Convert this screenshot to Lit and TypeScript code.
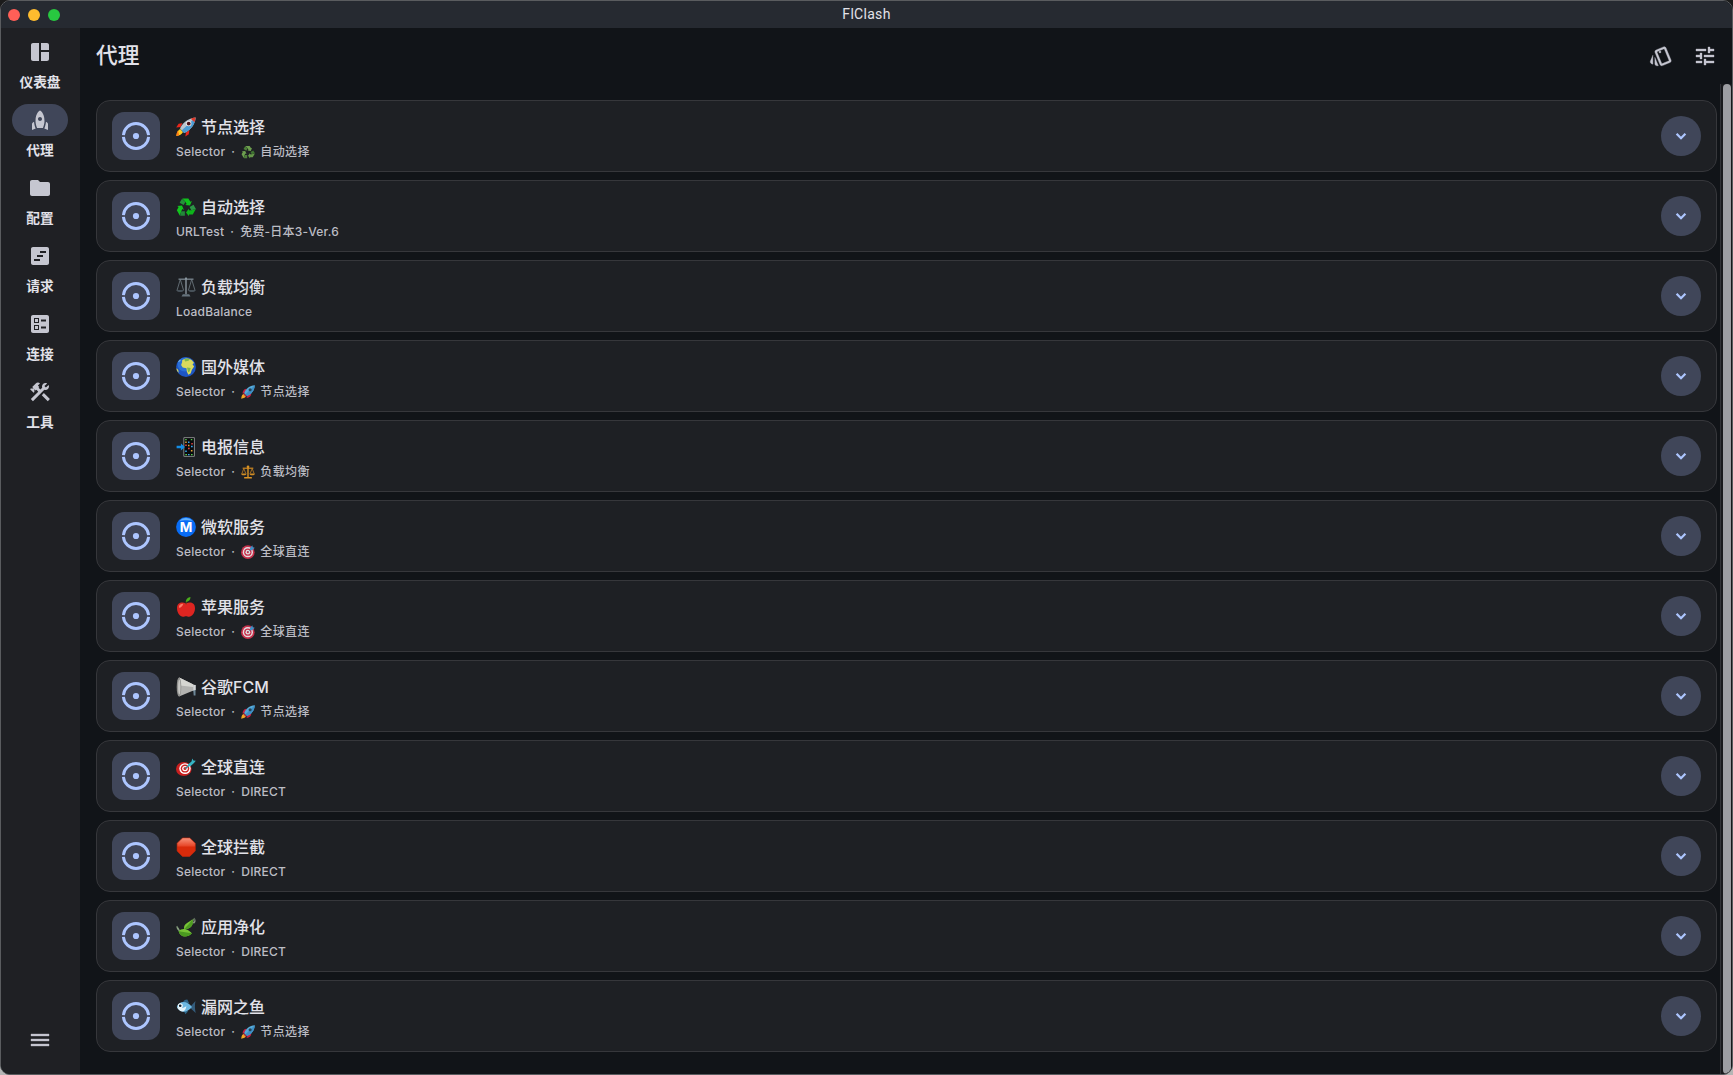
import { LitElement, html, css, svg, nothing } from "lit";
import { customElement, property } from "lit/decorators.js";

/* Rail and toolbar glyphs on a 24-unit grid */
const icons: Record<string, string> = {
  dashboard:
    "M11 21H5c-1.1 0-2-.9-2-2V5c0-1.1.9-2 2-2h6v18zm2 0h6c1.1 0 2-.9 2-2v-7h-8v9zm8-11V5c0-1.1-.9-2-2-2h-6v7h8z",
  rocket:
    "M12 2.5s4.5 2.04 4.5 10.5c0 2.49-1.04 5.57-1.6 7H9.1c-.56-1.43-1.6-4.51-1.6-7C7.5 4.54 12 2.5 12 2.5zm2 8.5c0-1.1-.9-2-2-2s-2 .9-2 2 .9 2 2 2 2-.9 2-2zm-6.31 9.52c-.48-1.23-1.52-4.17-1.67-6.87l-1.13.75c-.56.38-.89 1-.89 1.67V22l3.69-1.48zM20 22v-5.93c0-.67-.33-1.29-.89-1.66l-1.13-.75c-.15 2.69-1.2 5.64-1.67 6.87L20 22z",
  folder:
    "M10 4H4c-1.1 0-1.99.9-1.99 2L2 18c0 1.1.9 2 2 2h16c1.1 0 2-.9 2-2V8c0-1.1-.9-2-2-2h-8l-2-2z",
  timeline:
    "M19 3H5c-1.1 0-2 .9-2 2v14c0 1.1.9 2 2 2h14c1.1 0 2-.9 2-2V5c0-1.1-.9-2-2-2zM12 17H6v-2h6v2zm3-4H9v-2h6v2zm3-4h-6V7h6v2z",
  ballot:
    "M13 9.5h5v-2h-5v2zm0 7h5v-2h-5v2zm6 4.5H5c-1.1 0-2-.9-2-2V5c0-1.1.9-2 2-2h14c1.1 0 2 .9 2 2v14c0 1.1-.9 2-2 2zM6 11h5V6H6v5zm1-4h3v3H7V7zM6 18h5v-5H6v5zm1-4h3v3H7v-3z",
  construction:
    "M13.78 15.17l2.12-2.12 6.01 6-2.12 2.12zM17.5 10c1.93 0 3.5-1.57 3.5-3.5 0-.58-.16-1.12-.41-1.6l-2.7 2.7L16.4 6.11l2.7-2.7C18.62 3.16 18.08 3 17.5 3 15.57 3 14 4.57 14 6.5c0 .41.08.8.21 1.16l-1.85 1.85-1.78-1.78.71-.71L9.88 5.61 12 3.49c-1.17-1.17-3.07-1.17-4.24 0L4.22 7.03l1.41 1.41H2.81l-.71.71 3.54 3.54.71-.71V9.15l1.41 1.41.71-.71 1.78 1.78-7.41 7.41 2.12 2.12L16.34 9.79c.36.13.75.21 1.16.21z",
  menu: "M3 18h18v-2H3v2zm0-5h18v-2H3v2zm0-7v2h18V6H3z",
  tune: "M3 17v2h6v-2H3zM3 5v2h10V5H3zm10 16v-2h8v-2h-8v-2h-2v6h2zM7 9v2H3v2h4v2h2V9H7zm14 4v-2H11v2h10zm-6-4h2V7h4V5h-4V3h-2v6z",
  style:
    "M2.53 19.65l1.34.56v-9.03l-2.43 5.86c-.41 1.02.08 2.19 1.09 2.61zm19.5-3.7L17.07 3.98c-.31-.75-1.04-1.21-1.81-1.23-.26 0-.53.04-.79.15L7.1 5.95c-.75.31-1.21 1.03-1.23 1.8-.01.27.04.54.15.8l4.96 11.97c.31.76 1.05 1.22 1.83 1.23.26 0 .52-.05.77-.15l7.36-3.05c1.02-.42 1.51-1.59 1.09-2.6zm-9.2 3.8L7.87 7.79l7.35-3.04h.01l4.95 11.95-7.35 3.05zM11 9a1 1 0 1 0 0-2 1 1 0 0 0 0 2zM5.88 19.75c0 1.1.9 2 2 2h1.45l-3.45-8.34v6.34z",
};

const arm = (fill: string, dark: string) => svg`
  <path d="M6.2 1.6h6.2l2 3.2 1.5-.8-1.9 4.5-4.8-.6 1.5-.9-1.4-2.2z" fill=${fill}/>
  <path d="M6 1.7 9.4 5 7.6 8.1 3.6 5.8z" fill=${dark}/>`;

/* Small colour pictograms on a 20-unit grid */
const pictos: Record<string, unknown> = {
  rocket: svg`
    <path d="M6.4 6.3 2.6 6.8.2 10.4l4.4-.5z" fill="#e8261c"/>
    <path d="M13.4 13 12.8 17.2 9.3 19.6 10 15.4z" fill="#e8261c"/>
    <path d="M4.2 12.1c-2 1-3.4 3.4-3.9 6.9 3.4-.4 5.6-1.9 6.7-4z" fill="#ffcf22"/>
    <path d="M2 13.4c-1.1 1.5-1.5 3-1.7 5.6l2.9-.8z" fill="#ff7a14"/>
    <path d="M4 11.6C5.5 7.4 11 1.2 19.6.5 19 9 12.7 14.3 8.3 15.9z" fill="#b9c6d2"/>
    <path d="M8 15.9c4.6-1.6 11-7 11.6-15.4L5.6 13.6z" fill="#4b9bd3"/>
    <path d="M14.8 1.7c1.6-.7 3.2-1.1 4.8-1.2-.1 1.8-.5 3.3-1.1 4.8z" fill="#df3a2b"/>
    <circle cx="12.7" cy="6.6" r="2.7" fill="#f2e9e8"/><circle cx="12.7" cy="6.6" r="1.9" fill="#47131c"/>`,
  rocketFlat: svg`
    <path d="M8 5.5C4.6 5.6 2.7 8 2 12.2l5-1.8zM14.6 12c.2 3.8-2.4 5.8-6.8 6.5l2.2-4.8z" fill="#c51f45"/>
    <path d="M4.3 12.1C2 13 .6 15.6.3 19.5c3.8-.2 6.2-1.6 7.3-4z" fill="#f5a623"/>
    <path d="M4.4 11.7C6.5 5.5 12 1 19.7.3c-.5 7.7-5.1 13.3-11.4 15.3z" fill="#57abd9"/>
    <path d="M6 13.7 19.7.3c-.5 7.7-5.1 13.3-11.4 15.3z" fill="#3d8fc6"/>
    <circle cx="13" cy="6.8" r="2.2" fill="#23445b"/>
    <path d="M4.4 11.7 8.3 15.6 7 17 3.1 13z" fill="#a62140"/>`,
  recycle: svg`
    ${arm("#10c11c", "#24913a")}
    <g transform="rotate(120 10 10.8)">${arm("#0db41a", "#2d9447")}</g>
    <g transform="rotate(240 10 10.8)">${arm("#13c41e", "#23863a")}</g>`,
  recycleFlat: svg`
    ${arm("#6d9f4f", "#4d7f39")}
    <g transform="rotate(120 10 10.8)">${arm("#659749", "#3f7331")}</g>
    <g transform="rotate(240 10 10.8)">${arm("#6d9f4f", "#4d7f39")}</g>`,
  scales: svg`
    <g fill="none" stroke="#75818a" stroke-width=".75">
      <path d="M4.3 2.4 1 13.4M4.3 2.4 7.6 13.4M15.7 2.4l-3.3 11M15.7 2.4 19 13.4"/>
      <path d="M2.5 2.2h15" stroke-width="1.4"/></g>
    <path d="M.4 13.2h7.4c-.5 2-6.8 2-7.4 0zM12.2 13.2h7.4c-.5 2-6.8 2-7.4 0z" fill="#56616b"/>
    <path d="M9.3.7h1.4v16.5H9.3z" fill="#8a969f"/><circle cx="10" cy="1.5" r="1.1" fill="#8a969f"/>
    <path d="M6.8 17.2h6.4l1.3 2.2h-9z" fill="#66737d"/>`,
  scalesFlat: svg`
    <g fill="none" stroke="#c78322" stroke-width="1.1"><path d="M4 5 1.4 12M4 5l2.8 7M16 5l-2.8 7M16 5l2.6 7"/><path d="M2.4 4.6h15.2" stroke-width="1.8"/></g>
    <path d="M0 12h8c-.4 3.7-7.6 3.7-8 0zM12 12h8c-.4 3.7-7.6 3.7-8 0z" fill="#d28d24"/>
    <path d="M9 1.5h2v16H9zM4.5 17h11v2.2h-11z" fill="#d99325"/><circle cx="10" cy="2.5" r="1.9" fill="#d99325"/>`,
  globe: svg`
    <circle cx="10" cy="10" r="9.9" fill="#1d55c4"/><circle cx="8.6" cy="7.6" r="7" fill="#2f7be0" opacity=".7"/>
    <path d="M6.2 3.2c2.4-2 6-2.4 8.6-.8 1.5 1 2.6 2.2 3.2 3.6l-1.5 1.2 1.6 2.3-2.2 3.3-1.3 3.8-2.3 1.2-1.5-3.2-.3-3.4-3.8-.7-1.6-2.4 1-2.9z" fill="#d9d95d"/>
    <path d="M8.3 2.4c1.7-1.1 4-1 5.6-.2l-1.4 1.5-3.3.7zM11 10.5l3.7.6-1.1 3.5-1.4.6z" fill="#7eb64c"/>
    <path d="M.4 11.2c1.6.6 2.4 2.3 2.2 4.6C1.3 14.4.6 12.9.4 11.2z" fill="#d8d653"/>
    <path d="M2 5.2c.3-1 1.3-2 2.3-2.7l.4 1.5z" fill="#79b7e8"/>`,
  phone: svg`
    <rect x="7.4" y=".3" width="11.4" height="19.4" rx=".8" fill="#929493"/><rect x="8.3" y="1.1" width="9.6" height="17.8" fill="#080a0d"/>
    <g fill="#55c94b"><path d="M9.2 2h1.5v1.2H9.2zM14.8 2h1.5v1.2h-1.5zM9.3 17h1.7v1.3H9.3zM15 17h1.6v1.3H15z"/></g>
    <g fill="#e24141"><path d="M9.2 7.5h1.6V9H9.2zM12 10.8h1.7v1.5H12zM15.3 6h1.5v1.5h-1.5z"/></g>
    <g fill="#36a2ee"><path d="M12 4.6h1.5v1.5H12zM15 8.8h1.7v1.5H15zM9.2 13.5h1.6V15H9.2zM12 17h1.6v1.3H12z"/></g>
    <g fill="#e6a637"><path d="M9.2 4.6h1.5v1.5H9.2zM14.9 13h1.6v1.5h-1.6zM12 7.7h1.5v1.5H12z"/></g>
    <path d="M.6 8.8h4.3V6.5l4 3.5-4 3.5v-2.3H.6z" fill="#148ce4"/>`,
  metro: svg`
    <circle cx="10" cy="10" r="9.9" fill="#086cf5"/><path d="M3.3 4.4C6-.2 14-.2 16.7 4.4 13 3 7 3 3.3 4.4z" fill="#61b1ff"/>
    <text x="10" y="15" text-anchor="middle" font-family="Inter, sans-serif" font-size="13.5" font-weight="700" fill="#fff">M</text>`,
  apple: svg`
    <path d="M10 6.5C6.7 4.6 1 5 1 11.3c0 4.5 3 8.5 6 8.5 1.2 0 2-.5 3-.5s1.8.5 3 .5c3 0 6-4 6-8.5 0-6.3-5.7-6.7-9-4.8z" fill="#de2521"/>
    <path d="M3 9.2c.5-1.8 2.5-2.8 4.3-2.4-.5 2-2.4 4-4 4.2z" fill="#ff7a68"/>
    <path d="M10.2 7.4c-.3-1.3 0-2 .6-3" stroke="#70431e" stroke-width="1" fill="none"/>
    <path d="M9.7 5c.3-3 2-4.6 4.8-4.9C14.5 3 12.7 4.9 9.7 5z" fill="#4aae1b"/>`,
  horn: svg`
    <path d="M12.3 8.4 19.5 8v10.5l-1.8.1-.4-4.8-5 .2z" fill="#6d8798"/>
    <path d="M3.2.4 17.4 7.6v5.9L3 19.5z" fill="#b2b2b0"/><path d="m3.2.4 14.2 7.2-.1 2.3L4 8.5z" fill="#d6d6d2"/>
    <ellipse cx="3" cy="10" rx="2.3" ry="9.6" fill="#90908e"/><ellipse cx="3.3" cy="10" rx="1.2" ry="7.5" fill="#c7c7c4"/>
    <path d="m17.2 7.7 2.5.4v5l-2.5.5z" fill="#d6d6d6"/>`,
  dart: svg`
    <ellipse cx="7.8" cy="12" rx="7.8" ry="7" fill="#c81f1f"/><ellipse cx="9" cy="11.6" rx="5.7" ry="5.4" fill="#fff"/><ellipse cx="9" cy="11.6" rx="4.3" ry="4" fill="#cf2424"/><ellipse cx="9" cy="11.6" rx="2.8" ry="2.6" fill="#fff"/><circle cx="9" cy="11.6" r="1.5" fill="#cf2424"/>
    <path d="m9 11.8 6.2-5.3" stroke="#3f7f8b" stroke-width="1.2"/><path d="m11.7 9.6.2-2 3.600-3.100.8-3 1.100 2 2.400.3-1.800 2.300-3.600 3.200z" fill="#35b4c4"/>`,
  target: svg`
    <circle cx="9.8" cy="10.2" r="9.7" fill="#c7304b"/><circle cx="9.8" cy="10.2" r="7.3" fill="#e4dce0"/><circle cx="9.8" cy="10.2" r="5.3" fill="#c7304b"/><circle cx="9.8" cy="10.2" r="3.4" fill="#e4dce0"/><circle cx="9.8" cy="10.2" r="1.5" fill="#c7304b"/>
    <path d="m9.8 10.2 5.5-5.5" stroke="#7c8d99" stroke-width="1.3"/><path d="m12.8 4.5 3.300-4.200.8 2.800 2.800.8-4 3.500-2.800.2z" fill="#438fc6"/>`,
  stop: svg`
    <defs><linearGradient id="gloss" x1="0" y1="0" x2="0" y2="1"><stop offset="0" stop-color="#f7937c"/><stop offset=".42" stop-color="#e8492b"/><stop offset=".5" stop-color="#d92b0b"/></linearGradient></defs>
    <path d="M6.5.9h7.2l5.6 5.4v7.6l-5.6 5.5H6.5L1.100 14V6.300z" fill="url(#gloss)" stroke="#c9290c" stroke-width=".6"/>`,
  leaf: svg`
    <path d="M.8 9c1.500 2 2.600 4 3.200 6.500M6 14.500C10 11 15 8 18.300 1.500" stroke="#71846a" stroke-width="1.100" fill="none"/>
    <path d="M8.200 12.200C7 6.500 12.600 5.800 16.400 2.300c1.400 5-.6 9.900-8.200 9.900z" fill="#78c436"/><path d="M8.200 12.200C11 9 14 6.500 16.400 2.300c1.400 5-.6 9.900-8.200 9.900z" fill="#4e9c22"/>
    <path d="M2.600 14.300c3.500-3.800 9-2.800 13.300 2-4.300 4.600-11.300 4.800-13.300-2z" fill="#77c436"/><path d="M2.600 14.300c4.300.5 8.500 1.200 13.300 2-4.300 4.600-11.300 4.800-13.300-2z" fill="#4a9a20"/>
    <path d="M16.500 5c2-.3 2.400-1.800 1.700-4.500 2 2.200 1.800 5-.5 6.300z" fill="#84957c"/><path d="M.3 9.500c.5 2.700 1.400 3.800 3.200 4.500-.2-2-1.200-3.500-3.200-4.500z" fill="#8aa382"/>`,
  fish: svg`
    <path d="M7 5.500c.5-2 2-3 4.300-3l2 4zM7.500 13.500l2 3.700 2.700-3z" fill="#2e6487"/>
    <path d="M14.500 9.500 19.500 4c-.8 3.500-.8 7.500.2 12l-5.200-4.700z" fill="#345c7b"/>
    <path d="M.8 9.500C3 4.200 10.500 2.600 16 10 10.500 17 3 15.700.8 9.500z" fill="#6cb8e2"/>
    <path d="M1 10c2.500 1.500 6.800 1.500 9.300-1-.2 3-1.600 5.600-4.300 5.600C3.500 14 1.700 12 1 10z" fill="#e2f3fa"/>
    <circle cx="4.300" cy="8.800" r="2.500" fill="#f4fbfd"/><circle cx="4.200" cy="8.800" r="1.300" fill="#111d29"/>`,
};

@customElement("ui-icon")
class UiIcon extends LitElement {
  @property() name = "";
  static styles = css`
    :host { display: block; width: 24px; height: 24px; }
    .glyph { display: block; width: 100%; height: 100%; fill: #c5c6d0; }
    .outline { stroke: #c5c6d0; stroke-width: 0.35px; }
  `;
  render() {
    const outline = ["menu", "tune", "style"].includes(this.name);
    return html`<svg class="glyph ${outline ? "outline" : ""}" viewBox="0 0 24 24"><path d=${icons[this.name]} /></svg>`;
  }
}

@customElement("ui-picto")
class UiPicto extends LitElement {
  @property() name = "";
  static styles = css`
    :host { display: block; flex: none; }
    .art { display: block; width: 100%; height: 100%; }
  `;
  render() {
    return html`<svg class="art" viewBox="0 0 20 20">${pictos[this.name]}</svg>`;
  }
}

interface Group {
  picto: string;
  title: string;
  type: string;
  nowPicto?: string;
  now?: string;
}

@customElement("proxy-card")
class ProxyCard extends LitElement {
  @property({ attribute: false }) group!: Group;
  static styles = css`
    :host { display: block; }
    .card {
      box-sizing: border-box; height: 72px; display: flex; align-items: center; gap: 16px;
      padding: 0 15px; border: 1px solid #36373b; border-radius: 14px; background: #1e2024;
    }
    .tile { width: 48px; height: 48px; border-radius: 12px; background: #404659; flex: none; }
    .mark { display: block; width: 48px; height: 48px; }
    .body { flex: 1; display: flex; flex-direction: column; gap: 5px; padding-top: 2px; }
    .title { display: flex; align-items: center; height: 24px; gap: 5px; font-size: 16px; font-weight: 500; color: #e2e2e9; }
    .title ui-picto { width: 20px; height: 20px; margin-top: 1px; }
    .sub {
      display: flex; align-items: center; height: 17px; line-height: 17px; font-size: 12px; font-weight: 500;
      letter-spacing: 0.2px; color: #bcbdc4;
    }
    .sub ui-picto { width: 14px; height: 14px; margin-right: 5px; }
    .dot { width: 16px; text-align: center; }
    .spaced { letter-spacing: 0.4px; }
    .expand { width: 40px; height: 40px; border-radius: 50%; background: #404659; flex: none; }
    .chevron { display: block; width: 40px; height: 40px; fill: none; stroke: #adc6ff; stroke-width: 2.3; }
  `;
  render() {
    const g = this.group;
    return html`<div class="card">
      <div class="tile">
        <svg class="mark" viewBox="0 0 48 48">
          <path d="M11.4 23.1a12.65 12.65 0 0 1 25.2 0M11.4 24.9a12.65 12.65 0 0 0 25.2 0" fill="none" stroke="#adc6ff" stroke-width="2.9" />
          <circle cx="24" cy="24" r="3.1" fill="#adc6ff" />
        </svg>
      </div>
      <div class="body">
        <div class="title"><ui-picto name=${g.picto}></ui-picto><span>${g.title}</span></div>
        <div class="sub">
          <span class="type">${g.type}</span>
          ${g.now
            ? html`<span class="dot">·</span>${g.nowPicto
                  ? html`<ui-picto name=${g.nowPicto}></ui-picto>`
                  : nothing}<span class=${g.nowPicto ? "spaced" : ""}>${g.now}</span>`
            : nothing}
        </div>
      </div>
      <div class="expand">
        <svg class="chevron" viewBox="0 0 40 40"><path d="m15.6 17.8 4.4 4.4 4.4-4.4" /></svg>
      </div>
    </div>`;
  }
}

const groups: Group[] = [
  { picto: "rocket", title: "节点选择", type: "Selector", nowPicto: "recycleFlat", now: "自动选择" },
  { picto: "recycle", title: "自动选择", type: "URLTest", now: "免费-日本3-Ver.6" },
  { picto: "scales", title: "负载均衡", type: "LoadBalance" },
  { picto: "globe", title: "国外媒体", type: "Selector", nowPicto: "rocketFlat", now: "节点选择" },
  { picto: "phone", title: "电报信息", type: "Selector", nowPicto: "scalesFlat", now: "负载均衡" },
  { picto: "metro", title: "微软服务", type: "Selector", nowPicto: "target", now: "全球直连" },
  { picto: "apple", title: "苹果服务", type: "Selector", nowPicto: "target", now: "全球直连" },
  { picto: "horn", title: "谷歌FCM", type: "Selector", nowPicto: "rocketFlat", now: "节点选择" },
  { picto: "dart", title: "全球直连", type: "Selector", now: "DIRECT" },
  { picto: "stop", title: "全球拦截", type: "Selector", now: "DIRECT" },
  { picto: "leaf", title: "应用净化", type: "Selector", now: "DIRECT" },
  { picto: "fish", title: "漏网之鱼", type: "Selector", nowPicto: "rocketFlat", now: "节点选择" },
];

const nav = [
  ["dashboard", "仪表盘"],
  ["rocket", "代理"],
  ["folder", "配置"],
  ["timeline", "请求"],
  ["ballot", "连接"],
  ["construction", "工具"],
];

@customElement("app-root")
class AppRoot extends LitElement {
  static styles = css`
    :host {
      display: block; width: 100vw; height: 100vh; overflow: hidden;
      background: linear-gradient(#1b1b1b 50%, #b5b5b5 50%);
      font-family: Inter, "Noto Sans CJK SC", sans-serif; color: #e2e2e9;
    }
    .window {
      box-sizing: border-box; height: 100%; display: flex; flex-direction: column; overflow: hidden;
      border: 1px solid #5a5c5f; border-radius: 10px; background: #111418;
    }
    .bar { height: 27px; flex: none; display: grid; grid-template-columns: 1fr auto 1fr; align-items: center; background: #262a31; }
    .lights { display: flex; gap: 8px; padding-left: 7px; }
    .light { width: 12px; height: 12px; border-radius: 50%; }
    .red { background: #ff5f57; }
    .amber { background: #febc2e; }
    .green { background: #28c840; }
    .name { font: 400 14px/20px Roboto, sans-serif; letter-spacing: 0.3px; padding-bottom: 1px; }
    .main { flex: 1; display: flex; min-height: 0; }
    .rail { width: 79px; flex: none; display: flex; flex-direction: column; align-items: center; padding: 8px 1px 22px 0; box-sizing: border-box; background: #1f2024; }
    .item { height: 68px; display: flex; flex-direction: column; align-items: center; }
    .pill { width: 56px; height: 32px; display: grid; place-items: center; border-radius: 16px; }
    .on { background: #404659; }
    .label { margin-top: 3px; font-size: 13.7px; line-height: 22px; font-weight: 600; }
    .menu { margin-top: auto; }
    .content { flex: 1; display: flex; flex-direction: column; min-width: 0; }
    .head { height: 56px; flex: none; display: flex; align-items: center; padding: 0 15px 0 16px; }
    .heading { flex: 1; font-size: 21.7px; font-weight: 500; line-height: 28px; margin: 0; padding-bottom: 2px; }
    .tools { display: flex; gap: 20px; }
    .scroller { flex: 1; display: flex; min-height: 0; }
    .list { flex: 1; display: flex; flex-direction: column; gap: 8px; padding: 16px 3px 0 16px; }
    .track { width: 12px; flex: none; box-sizing: border-box; padding: 0 1px 0 2px; border-left: 1px solid #313237; background: #18191c; }
    .thumb { height: 100%; border-radius: 4px; background: #9c9da2; }
  `;
  render() {
    return html`<div class="window">
      <div class="bar">
        <div class="lights"><i class="light red"></i><i class="light amber"></i><i class="light green"></i></div>
        <div class="name">FlClash</div>
      </div>
      <div class="main">
        <nav class="rail">
          ${nav.map(
            ([icon, label], i) => html`<div class="item">
              <div class="pill ${i === 1 ? "on" : ""}"><ui-icon name=${icon}></ui-icon></div>
              <div class="label">${label}</div>
            </div>`
          )}
          <ui-icon class="menu" name="menu"></ui-icon>
        </nav>
        <div class="content">
          <header class="head">
            <h1 class="heading">代理</h1>
            <div class="tools"><ui-icon name="style"></ui-icon><ui-icon name="tune"></ui-icon></div>
          </header>
          <div class="scroller">
            <div class="list">${groups.map((g) => html`<proxy-card .group=${g}></proxy-card>`)}</div>
            <div class="track"><div class="thumb"></div></div>
          </div>
        </div>
      </div>
    </div>`;
  }
}
